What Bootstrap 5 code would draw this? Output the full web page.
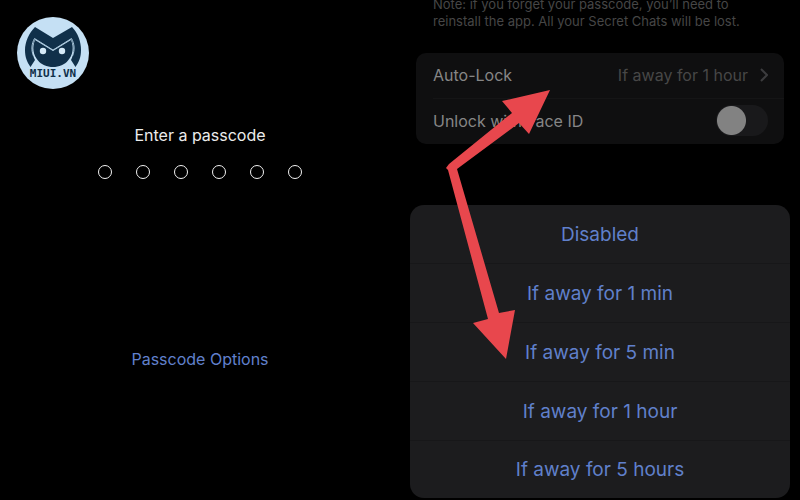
<!DOCTYPE html>
<html lang="en" data-bs-theme="dark">
<head>
<meta charset="utf-8">
<meta name="viewport" content="width=device-width, initial-scale=1">
<title>Passcode settings</title>
<link href="https://cdn.jsdelivr.net/npm/bootstrap@5.3.0/dist/css/bootstrap.min.css" rel="stylesheet">
<style>
  body { background: #000; font-family: Inter, "Liberation Sans", sans-serif; font-size: 16px; }
  .screen { min-height: 100vh; }
  .brand { padding: 17px 0 0 17px; }
  .brand-logo { width: 72px; height: 72px; }
  .prompt-title { font-size: 16px; line-height: 24px; color: #ececec; margin-top: 34px; }
  .digits { gap: 24px; margin-top: 18px; }
  .digit { width: 14px; height: 14px; border: 1px solid #f2f2f2; }
  .options-link { color: #6180cd; line-height: 24px; margin-top: 168px; }
  .note { color: #464646; font-size: 13px; line-height: 17px; margin: -4px 0 23px; padding: 0 33px; }
  .settings { background: #0f0f10; border-radius: 10px; margin: 0 16px; color: #868686; }
  .setting { min-height: 45px; margin-left: 17px; padding: 0 16px 2px 0; line-height: 24px; }
  .setting + .setting { border-top: 1px solid #151516; min-height: 46px; }
  .setting-value { color: #474747; gap: 12px; }
  .form-check-input.toggle { width: 52px; height: 31px; margin: 0; border: 0; background-color: #19191b;
    background-image: radial-gradient(circle, #828282 14px, transparent 15px);
    background-size: 31px 31px; background-repeat: no-repeat; background-position: left center; border-radius: 16px; }
  .form-check-input.toggle:checked { background-position: right center; }
  .sheet { background: #1c1c1e; border-radius: 14px; margin: 61px 10px 2px; }
  .choice { height: 59px; color: #6080cb; font-size: 19px; line-height: 24px; background: none; border: 0; padding-top: 2px; }
  .choice + .choice { border-top: 1px solid #171719; }
  .choice:first-child, .choice:last-child { height: 58px; }
  .pointer { left: 46px; top: 90px; width: 105px; height: 270px; pointer-events: none; }
</style>
<script src="https://cdn.jsdelivr.net/npm/bootstrap@5.3.0/dist/js/bootstrap.bundle.min.js"></script>
</head>
<body>
<main class="container-fluid p-0 overflow-hidden">
  <div class="row g-0">
    <section class="col-6 screen d-flex flex-column align-items-center">
      <div class="brand align-self-start">
        <svg class="brand-logo d-block" viewBox="17 17 72 72" role="img" aria-label="MIUI.VN">
          <circle cx="53" cy="53" r="36" fill="#c5e0f4"/>
          <path d="M35 27 53 38 72 27C78 33 81 42 81 50C81 57 79 62 75.500 67L71 60C74 54 75 47 71 39L53 50L35 39C31 47 32 54 35 60L30.500 67C27 62 25 57 25 50C25 42 29 33 35 27Z" fill="#10304a"/>
          <path d="M35 40 53 51 71 40C74 47 73 55 68 60.500C65 64.500 59 67 53 67S41 64.500 38 60.500C33 55 32 47 35 40Z" fill="#10304a"/>
          <path d="M33.500 56C31 50 31.500 44 34.500 38.500L53 50L71.500 38.500C74.500 44 75 50 72.500 56" fill="none" stroke="#a9c7dc" stroke-width="1"/>
          <circle cx="43" cy="51" r="3.200" fill="#d5eaf8"/><circle cx="62" cy="51" r="3.200" fill="#d5eaf8"/>
          <text x="53" y="77" text-anchor="middle" font-family="DejaVu Sans Mono, monospace" font-weight="700" font-size="11" fill="#10304a">MIUI.VN</text>
        </svg>
      </div>
      <h1 class="prompt-title fw-normal mb-0">Enter a passcode</h1>
      <div class="digits d-flex" role="img" aria-label="0 of 6 digits entered">
        <span class="digit rounded-circle"></span><span class="digit rounded-circle"></span><span class="digit rounded-circle"></span><span class="digit rounded-circle"></span><span class="digit rounded-circle"></span><span class="digit rounded-circle"></span>
      </div>
      <a href="#" class="options-link text-decoration-none">Passcode Options</a>
    </section>

    <section class="col-6 screen position-relative">
      <p class="note">Note: if you forget your passcode, you’ll need to<br>reinstall the app. All your Secret Chats will be lost.</p>
      <div class="settings">
        <div class="setting d-flex align-items-center justify-content-between">
          <span>Auto-Lock</span>
          <span class="setting-value d-flex align-items-center">If away for 1 hour
            <svg width="8" height="14" viewBox="0 0 8 14" fill="none" stroke="#3c3c3e" stroke-width="2" aria-hidden="true"><path d="M1 1 7 7 1 13"/></svg>
          </span>
        </div>
        <div class="setting d-flex align-items-center justify-content-between">
          <label for="face-id">Unlock with Face ID</label>
          <input class="form-check-input toggle" type="checkbox" role="switch" id="face-id">
        </div>
      </div>
      <div class="sheet d-flex flex-column overflow-hidden">
        <button type="button" class="choice">Disabled</button>
        <button type="button" class="choice">If away for 1 min</button>
        <button type="button" class="choice">If away for 5 min</button>
        <button type="button" class="choice">If away for 1 hour</button>
        <button type="button" class="choice">If away for 5 hours</button>
      </div>
      <svg class="pointer position-absolute" viewBox="446 90 105 270" fill="#e8474d" aria-hidden="true">
        <path d="M446 168 449 164 512 113 502 101 550 90 529 134 519 123 457 169 499 313 515 310 506 359 473 323 488 319 448 170Z"/>
      </svg>
    </section>
  </div>
</main>
</body>
</html>
